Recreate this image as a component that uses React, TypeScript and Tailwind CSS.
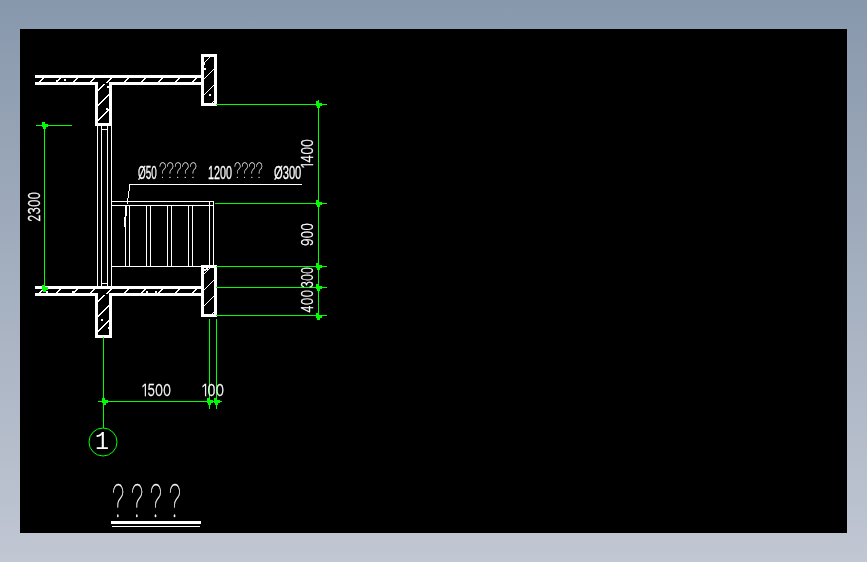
const WHITE = '#ffffff';
const GREEN = '#00ff00';

type Seg = [number, number, number, number];

// thin white lines of the window and railing
const thinLines: Seg[] = [
  [97, 126, 97, 287], [101, 126, 101, 287], [107, 126, 107, 287], [111, 126, 111, 287],
  [101, 129, 107, 129], [101, 283, 107, 283],
  [111, 201, 213, 201], [111, 205, 213, 205], [111, 266, 202, 266],
  [209, 201, 209, 266], [213, 201, 213, 266],
  [125, 205, 125, 266], [129, 205, 129, 266],
  [146, 205, 146, 266], [150, 205, 150, 266],
  [167, 205, 167, 266], [171, 205, 171, 266],
  [188, 205, 188, 266], [192, 205, 192, 266],
  [302, 184, 130, 184], [130, 184, 128, 198],
];

// green dimension lines
const dimLines: Seg[] = [
  [216, 104, 327, 104], [215, 203, 327, 203], [216, 266, 327, 266],
  [216, 287, 327, 287], [216, 315, 327, 315],
  [318, 100, 318, 320],
  [36, 125, 72, 125], [44, 122, 44, 288],
  [98, 401, 222, 401], [103, 337, 103, 428],
  [209, 319, 209, 409], [216, 319, 216, 409],
];

const ticks: [number, number][] = [
  [318, 104], [318, 203], [318, 266], [318, 287], [318, 316],
  [44, 125], [44, 288], [104, 401], [209, 401], [216, 401],
];

const specks: [number, number][] = [
  [56, 80], [64, 79], [107, 86], [106, 108], [203, 63], [204, 68], [209, 94], [214, 87],
  [46, 291], [72, 291], [146, 291], [155, 291], [101, 319], [108, 327], [204, 269], [206, 268],
];

function hatch(x: number, y: number, w: number, h: number, step: number) {
  const out: Seg[] = [];
  for (let c = x + step / 2; c < x + w + h; c += step) {
    out.push([c, y, c - h, y + h]);
  }
  return { id: `h${x}-${y}`, x, y, w, h, lines: out };
}

const hatches = [
  hatch(36, 77, 166, 6, 17),
  hatch(36, 288, 166, 6, 17),
  hatch(97, 84, 13, 41, 15),
  hatch(97, 295, 13, 41, 15),
  hatch(203, 56, 12, 48, 16),
  hatch(203, 267, 12, 48, 16),
];

function Dim({ t, x, y, w, rotate }: { t: string; x: number; y: number; w: number; rotate?: boolean }) {
  return (
    <text
      x={x}
      y={y}
      fontSize={16}
      fill={WHITE}
      stroke={WHITE}
      strokeWidth="0.3"
      textLength={w}
      lengthAdjust="spacingAndGlyphs"
      className="font-['Inter'] font-light"
      transform={rotate ? `rotate(-90 ${x} ${y})` : undefined}
    >
      {t}
    </text>
  );
}

// condensed digits of the note, squeezed by a transform
function Note({ t, x, sx }: { t: string; x: number; sx: number }) {
  return (
    <text
      transform={`translate(${x} 179) scale(${sx} 1)`}
      fontSize={18}
      fill={WHITE}
      stroke={WHITE}
      strokeWidth="0.3"
      className="font-['Liberation_Sans']"
    >
      {t}
    </text>
  );
}

function Marks({ t, x, w }: { t: string; x: number; w: number }) {
  return (
    <text
      x={x}
      y={178}
      fontSize={21}
      fill={WHITE}
      stroke={WHITE}
      strokeWidth="0.2"
      textLength={w}
      lengthAdjust="spacingAndGlyphs"
      className="font-['Inter'] font-thin"
    >
      {t}
    </text>
  );
}

function Drawing() {
  return (
    <svg width="827" height="504" viewBox="20 29 827 504" className="block">
      <g shapeRendering="crispEdges">
        {hatches.map((h) => (
          <g key={h.id}>
            <clipPath id={h.id}>
              <rect x={h.x} y={h.y} width={h.w} height={h.h} />
            </clipPath>
            <g clipPath={`url(#${h.id})`} stroke={WHITE} strokeWidth="1">
              {h.lines.map((l, i) => (
                <line key={i} x1={l[0]} y1={l[1]} x2={l[2]} y2={l[3]} />
              ))}
            </g>
          </g>
        ))}

        {/* walls and piers */}
        <g fill="none" stroke={WHITE} strokeWidth="3">
          <path d="M35 76.5H202M35 83H96.5V124.5H110.5V83H202" />
          <rect x="202.5" y="55.5" width="13" height="49" />
          <path d="M35 287.5H202M35 294.5H96.5V336.5H110.5V294.5H202" />
          <rect x="202.5" y="266.5" width="13" height="49" />
        </g>

        <g stroke={WHITE} strokeWidth="1">
          {thinLines.map((l, i) => (
            <line key={i} x1={l[0]} y1={l[1]} x2={l[2]} y2={l[3]} />
          ))}
          <line x1="127" y1="198" x2="127" y2="204" />
          <line x1="126" y1="206" x2="126" y2="216" />
          <line x1="125" y1="217" x2="125" y2="227" strokeWidth="2" />
        </g>

        <g fill={WHITE}>
          {specks.map(([x, y]) => (
            <rect key={`${x}-${y}`} x={x} y={y} width="2" height="2" />
          ))}
        </g>

        <g stroke={GREEN} strokeWidth="1">
          {dimLines.map((l, i) => (
            <line key={i} x1={l[0]} y1={l[1]} x2={l[2]} y2={l[3]} />
          ))}
        </g>
        <g fill={GREEN}>
          {ticks.map(([x, y]) => (
            <path key={`${x}-${y}`} d={`M${x - 2} ${y - 3}h3v2h3v3h-2v2h-3v-2h-1z`} />
          ))}
        </g>
      </g>
      <circle cx="103" cy="442" r="14" fill="none" stroke={GREEN} strokeWidth="1" />

      <g className="opacity-[0.995]">
        {/* note over the railing */}
        <Note t="Ø50" x={138} sx={0.55} />
        <Marks t="?????" x={159} w={38} />
        <Note t="1200" x={208} sx={0.6} />
        <Marks t="????" x={234} w={29} />
        <Note t="Ø300" x={274} sx={0.62} />

        {/* dimension values */}
        <Dim t="1400" x={313} y={168} w={29} rotate />
        <Dim t="900" x={313} y={246} w={23} rotate />
        <Dim t="300" x={313} y={288} w={21} rotate />
        <Dim t="400" x={313} y={313} w={23} rotate />
        <Dim t="2300" x={40} y={222} w={30} rotate />
        <Dim t="1500" x={142} y={396} w={29} />
        <Dim t="100" x={202} y={396} w={22} />

        <text
          x={95}
          y={449}
          fontSize={25}
          fill={WHITE}
          textLength={14}
          lengthAdjust="spacingAndGlyphs"
          className="font-['Liberation_Mono']"
        >
          1
        </text>

        {/* title */}
        <text
          transform="translate(112 517) scale(0.6 1)"
          fontSize={44}
          letterSpacing={10.5}
          fill={WHITE}
          stroke={WHITE}
          strokeWidth="0.3"
          className="font-['Inter'] font-thin"
        >
          ????
        </text>
      </g>
      <g fill={WHITE} shapeRendering="crispEdges">
        <rect x="111" y="521" width="90" height="3" />
        <rect x="112" y="526" width="88" height="1" />
      </g>
    </svg>
  );
}

export default function App() {
  return (
    <div className="h-[562px] w-[867px] overflow-hidden bg-gradient-to-b from-[#8898ac] to-[#c1c7d3] px-5 pt-[29px]">
      <div className="h-[504px] w-[827px] bg-black">
        <Drawing />
      </div>
    </div>
  );
}
